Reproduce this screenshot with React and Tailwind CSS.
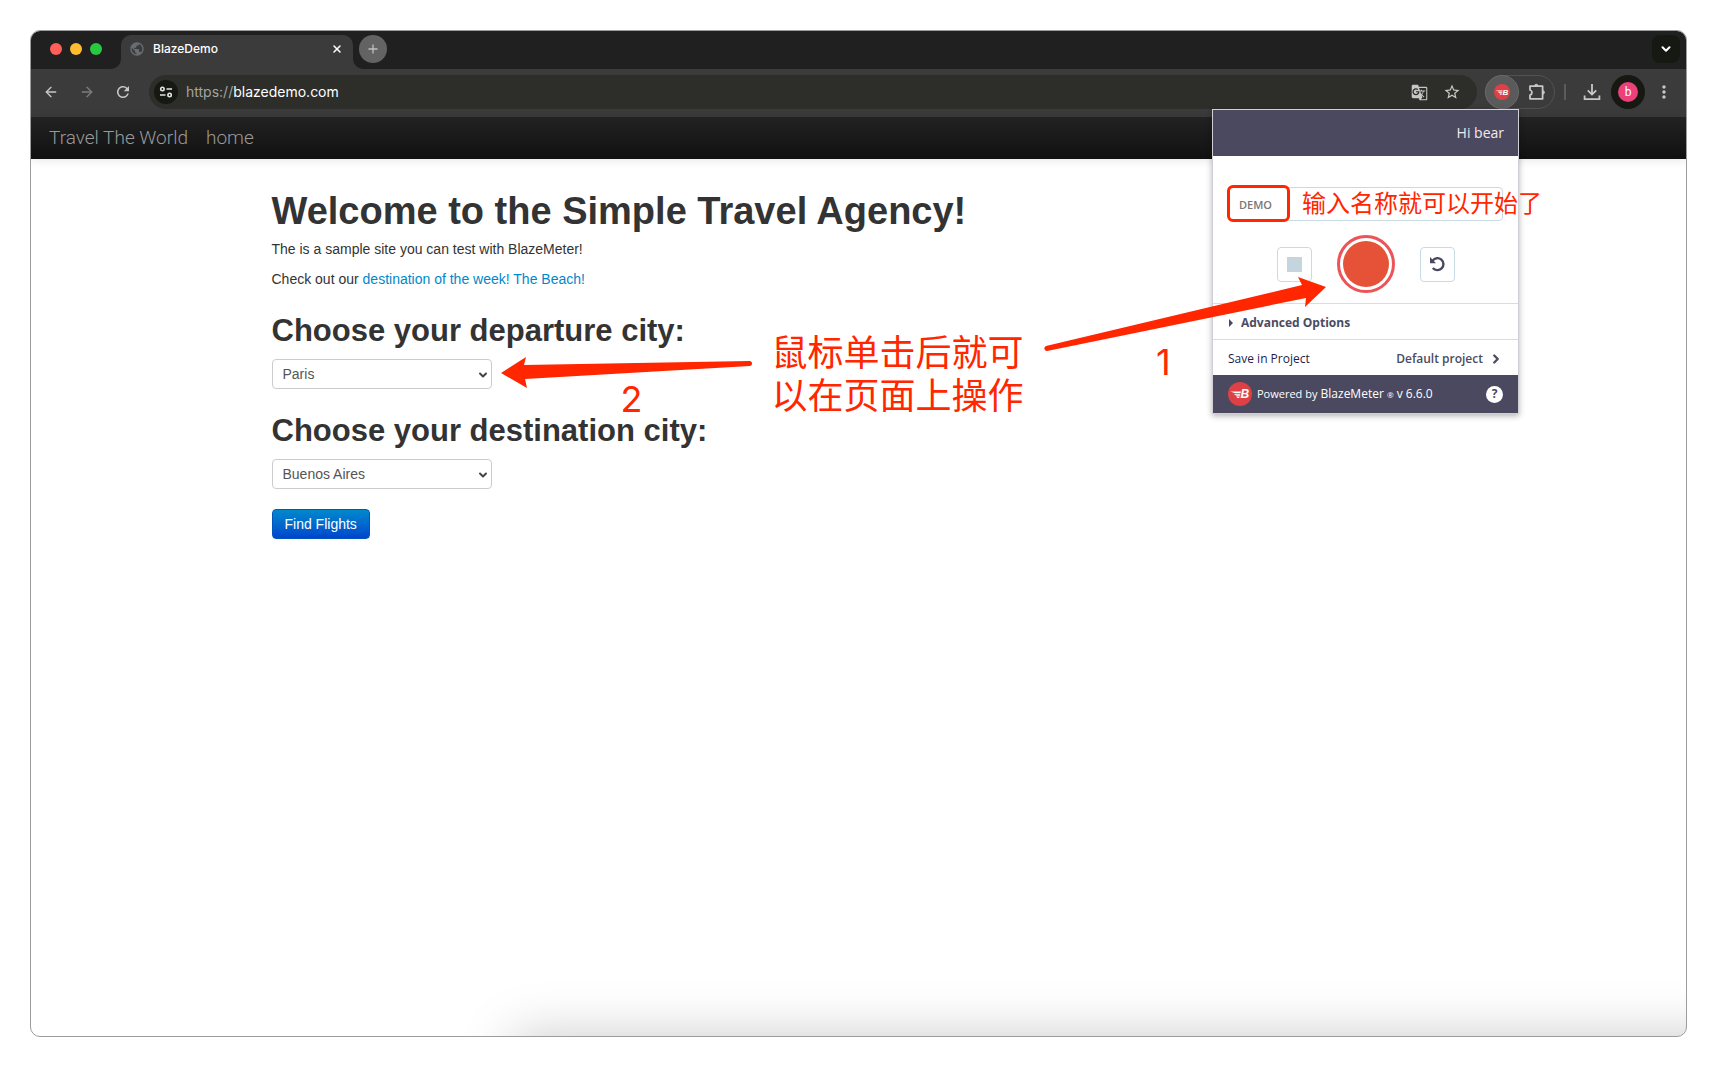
import { ChevronDown, ChevronRight, Plus, X, ArrowLeft, ArrowRight } from 'lucide-react';
import { MdRefresh, MdStarOutline, MdMoreVert, MdPublic, MdGTranslate } from 'react-icons/md';

function BlazeLogo({ className }) {
  return (
    <svg viewBox="0 0 24 24" className={className} aria-hidden="true">
      <circle cx="12" cy="12" r="12" fill="#dd4145" />
      <path d="M2.5 9.6H13l-.5 1.7H7zM5.5 12.2h6.8l-.4 1.5H8.6zM8 14.6h3.6l-.4 1.4H9.6z" fill="#fff" />
      <text x="12.6" y="16.2" fill="#fff" fontFamily="Liberation Sans, sans-serif" fontSize="12" fontWeight="700" fontStyle="italic">B</text>
    </svg>
  );
}

function TabStrip() {
  return (
    <div className="flex h-[38px] items-end bg-[#202020] pl-[19px] pr-1.5">
      <div className="flex h-10 items-center gap-2">
        <span className="size-3 rounded-full bg-[#ff5f57]" />
        <span className="size-3 rounded-full bg-[#febc2e]" />
        <span className="size-3 rounded-full bg-[#28c840]" />
      </div>
      <div className="relative ml-[19px] flex h-[34px] w-[232px] items-center rounded-t-[10px] bg-[#3b3b3b] px-2 pb-1.5">
        <svg className="absolute -left-2.5 bottom-0 size-2.5" viewBox="0 0 10 10" aria-hidden="true">
          <path d="M10 0v10H0A10 10 0 0 0 10 0z" fill="#3b3b3b" />
        </svg>
        <svg className="absolute -right-2.5 bottom-0 size-2.5" viewBox="0 0 10 10" aria-hidden="true">
          <path d="M0 0v10h10A10 10 0 0 1 0 0z" fill="#3b3b3b" />
        </svg>
        <MdPublic className="size-4 text-[#696d73]" />
        <span className="ml-2 flex-1 text-xs font-medium text-white">BlazeDemo</span>
        <button aria-label="Close tab" className="flex size-4 items-center justify-center text-white">
          <X className="size-3" strokeWidth={3} />
        </button>
      </div>
      <button aria-label="New tab" className="mb-1.5 ml-1.5 flex size-7 items-center justify-center rounded-full bg-[#636363] text-[#c0c0c0]">
        <Plus className="size-3.5" strokeWidth={2.2} />
      </button>
      <button aria-label="Search tabs" className="mb-1.5 ml-auto flex size-7 items-center justify-center rounded-lg bg-[#161812] text-white">
        <ChevronDown className="size-3.5" strokeWidth={3.5} />
      </button>
    </div>
  );
}

function Toolbar() {
  return (
    <div className="flex h-12 items-center bg-[#3b3b3b] pb-0.5 pl-0.5 pr-[11px] text-[#c7c7c7]">
      <button aria-label="Back" className="flex w-9 justify-center"><ArrowLeft className="size-4" /></button>
      <button aria-label="Forward" className="flex w-9 justify-center text-[#7e7e7e]"><ArrowRight className="size-4" /></button>
      <button aria-label="Reload" className="flex w-9 justify-center"><MdRefresh className="size-[18px]" /></button>
      <div className="ml-2 flex h-[34px] flex-1 items-center rounded-full bg-[#2d2e29] pl-[5px] pr-4">
        <button aria-label="Site settings" className="flex size-6 items-center justify-center rounded-full bg-[#161812]">
          <svg className="size-3.5" viewBox="0 0 14 14" fill="none" stroke="#e4e4e4" strokeWidth="1.6" aria-hidden="true">
            <circle cx="3.4" cy="4" r="1.7" /><path d="M7.5 4H13M1 10h5.5" /><circle cx="10.6" cy="10" r="1.7" />
          </svg>
        </button>
        <a href="https://blazedemo.com" className="ml-2 text-sm text-[#a3a3a3]">
          https://<span className="text-white">blazedemo.com</span>
        </a>
        <div className="ml-auto flex items-center gap-[15px]">
          <button aria-label="Translate"><MdGTranslate className="size-[17px]" /></button>
          <button aria-label="Bookmark"><MdStarOutline className="size-[18px]" /></button>
        </div>
      </div>
      <div className="ml-2 flex h-[34px] w-[70px] items-center rounded-full border border-[#525252]">
        <button aria-label="BlazeMeter extension" className="-ml-px flex size-[34px] items-center justify-center rounded-full border border-[#6a6a6a] bg-[#5a5a5a]">
          <BlazeLogo className="size-4" />
        </button>
        <button aria-label="Extensions" className="flex flex-1 justify-center">
          <svg className="size-[18px]" viewBox="0 0 18 18" fill="none" stroke="currentColor" strokeWidth="1.8" strokeLinejoin="round" aria-hidden="true">
            <path d="M2 3.2h12.6v12.6H2v-3.6a2.7 2.7 0 0 0 0-5.2z" />
            <path d="M6.6 3a1.7 1.7 0 0 1 3.4 0zM14.8 7.8a1.6 1.6 0 0 1 0 3.2z" fill="currentColor" strokeWidth="1" />
          </svg>
        </button>
      </div>
      <span className="ml-[9px] h-4 w-0.5 bg-[#5b5b5b]" />
      <button aria-label="Downloads" className="flex w-[45px] justify-center pl-1.5">
        <svg className="size-[18px]" viewBox="0 0 18 18" fill="none" stroke="currentColor" strokeWidth="1.8" aria-hidden="true">
          <path d="M9 1v10.5M4.8 7.4 9 11.6l4.2-4.2M1.6 12.5v3.6h14.8v-3.6" />
        </svg>
      </button>
      <button aria-label="Profile" className="flex size-[34px] items-center justify-center rounded-full bg-[#161812]">
        <span className="flex size-5 items-center justify-center rounded-full bg-[#ec407a] font-['Roboto',sans-serif] text-xs text-white">b</span>
      </button>
      <button aria-label="Menu" className="ml-2 flex w-[22px] justify-center"><MdMoreVert className="size-5" /></button>
    </div>
  );
}

function CitySelect({ id, title, options }) {
  return (
    <>
      <h2 className="mb-2 mt-[22px] text-[31px] leading-10 font-bold"><label htmlFor={id}>{title}</label></h2>
      <div className="relative mb-5 w-[220px]">
        <select id={id} className="block h-[30px] w-full appearance-none rounded border border-[#ccc] bg-white px-2.5 text-sm text-[#555]">
          {options.map((o) => <option key={o}>{o}</option>)}
        </select>
        <ChevronDown className="pointer-events-none absolute right-[3px] top-[10px] size-3 text-[#444]" strokeWidth={4} />
      </div>
    </>
  );
}

function ExtensionPopup() {
  return (
    <aside className="absolute right-[167px] top-[78px] z-10 w-[307px] border border-[#cfcfd6] bg-white font-['Open_Sans',sans-serif] text-xs text-[#4b4b62] shadow-[0_2px_6px_rgba(0,0,0,0.3)]">
      <header className="flex h-[46px] items-center justify-end bg-[#4b4960] px-3.5 text-sm text-[#f4e8ec]">Hi bear</header>
      <div className="px-[15px] pt-[31px]">
        <input aria-label="Test name" defaultValue="DEMO" className="block h-[34px] w-full rounded-sm border border-[#c9dae3] px-2.5 text-[11px] font-semibold text-[#777]" />
        <div className="flex items-center justify-center gap-[25px] pb-2.5 pt-3.5">
          <button aria-label="Stop" className="flex size-[35px] items-center justify-center rounded border border-[#c9dae3]">
            <span className="size-[15px] bg-[#c5d5de]" />
          </button>
          <button aria-label="Record" className="flex size-[58px] items-center justify-center rounded-full border-[3px] border-[#eb5459]">
            <span className="size-[46px] rounded-full bg-[#e65238]" />
          </button>
          <button aria-label="Reset" className="flex size-[35px] items-center justify-center rounded border border-[#c9dae3]">
            <svg className="size-4" viewBox="0 0 16 16" fill="none" aria-hidden="true">
              <path d="M3.6 4.6A6 6 0 1 1 3.8 12" stroke="#4b4960" strokeWidth="2.4" />
              <path d="M1 1v6.2h6z" fill="#4b4960" />
            </svg>
          </button>
        </div>
      </div>
      <button className="flex h-9 w-full items-center border-t border-[#dcdcdc] px-4 pt-0.5 font-bold">
        <svg className="mr-2 h-2 w-1" viewBox="0 0 4 8" aria-hidden="true"><path d="M0 0l4 4-4 4z" fill="#4b4960" /></svg>
        Advanced Options
      </button>
      <div className="flex h-9 items-center justify-between border-t border-[#dcdcdc] px-[15px] pt-0.5">
        <span className="text-[#1f1d4e]">Save in Project</span>
        <button className="flex items-center font-semibold">
          Default project
          <ChevronRight className="ml-1.5 size-3.5" strokeWidth={4} />
        </button>
      </div>
      <footer className="flex h-[38px] items-center bg-[#4b4960] px-[15px] text-white">
        <BlazeLogo className="size-6" />
        <span className="ml-[5px] flex-1"><span className="text-[11px]">Powered by</span> BlazeMeter <span className="text-[8px]">®</span> v 6.6.0</span>
        <button aria-label="Help" className="flex size-[17px] items-center justify-center rounded-full bg-white text-xs font-bold text-[#4b4960]">?</button>
      </footer>
      <div className="absolute left-[14px] top-[75px] h-[37px] w-[63px] rounded-md border-[3px] border-[#ff2600]" />
      <p className="absolute left-[89px] top-[74px] font-['Noto_Sans_CJK_SC',sans-serif] text-2xl leading-9 whitespace-nowrap text-[#ff2600]">输入名称就可以开始了</p>
      <svg className="absolute -left-[171px] top-[165px] h-[80px] w-[290px]" viewBox="0 0 290 80" aria-hidden="true">
        <path d="M4 71 L260 10 L256 2 L284 12 L263 32 L264 23 L5 76 A2.6 2.6 0 0 1 4 71z" fill="#ff2600" />
      </svg>
      <span className="absolute -left-[57px] top-[232px] font-['Inter',sans-serif] text-4xl leading-10 text-[#ff2600]">1</span>
    </aside>
  );
}

export default function App() {
  return (
    <div className="flex min-h-screen bg-white p-[30px] font-['Inter',sans-serif]">
      <div className="relative flex flex-1 flex-col overflow-hidden rounded-[10px] border border-[#9c9c9c] bg-white">
        <TabStrip />
        <Toolbar />
        <nav className="flex h-[42px] items-center gap-[18px] bg-linear-to-b from-[#222] to-[#111] px-[18px] font-['Roboto',sans-serif] text-[19px] font-light text-[#999] shadow-[0_1px_10px_rgba(0,0,0,0.1)]">
          <a href="#top">Travel The World</a>
          <a href="#home">home</a>
        </nav>
        <main className="relative mx-auto w-full max-w-[1174px] pt-8 font-['Liberation_Sans',sans-serif] text-sm leading-5 text-[#333]">
          <h1 className="mb-2 text-[38px] leading-10 font-bold">Welcome to the Simple Travel Agency!</h1>
          <p className="mb-2.5">The is a sample site you can test with BlazeMeter!</p>
          <p className="mb-5">Check out our <a href="#vacation" className="text-[#0088cc]">destination of the week! The Beach!</a></p>
          <form>
            <CitySelect id="from" title="Choose your departure city:" options={['Paris', 'Philadelphia', 'Boston']} />
            <CitySelect id="to" title="Choose your destination city:" options={['Buenos Aires', 'Rome', 'London']} />
            <button type="button" className="h-[30px] rounded border border-[#0055bb] bg-linear-to-b from-[#0088cc] to-[#0044cc] px-3 text-sm text-white">Find Flights</button>
          </form>
          <svg className="absolute left-[228px] top-[198px] h-8 w-[254px]" viewBox="0 0 254 32" aria-hidden="true">
            <path d="M1 16 L26 0 L24 8 L249 4 A2.5 2.5 0 0 1 250 9 L25 22 L27 31z" fill="#ff2600" />
          </svg>
          <span className="absolute left-[349px] top-[220px] font-['Inter',sans-serif] text-4xl leading-10 text-[#ff2600]">2</span>
          <p className="absolute left-[500px] top-[170px] w-[260px] font-['Noto_Sans_CJK_SC',sans-serif] text-4xl leading-[43px] text-[#ff2600]">
            鼠标单击后就可<br />以在页面上操作
          </p>
        </main>
        <ExtensionPopup />
        <div className="absolute -right-20 -bottom-40 left-[482px] h-40 shadow-[0_0_50px_rgba(0,0,0,0.21)]" />
      </div>
    </div>
  );
}
